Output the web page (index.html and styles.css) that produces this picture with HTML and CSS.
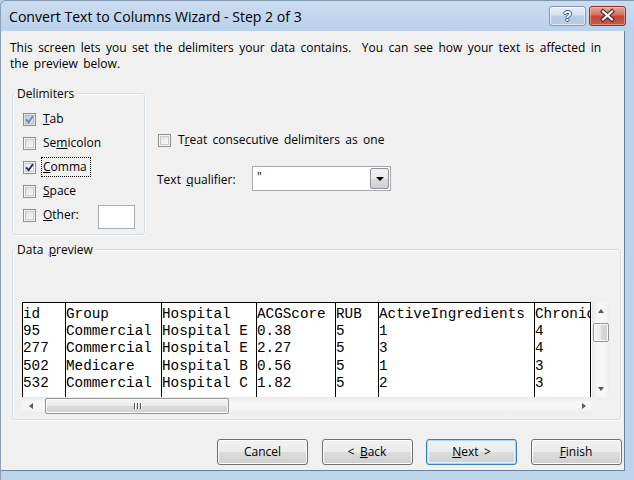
FILE: index.html
```html
<!DOCTYPE html>
<html>
<head>
<meta charset="utf-8">
<title>Convert Text to Columns Wizard - Step 2 of 3</title>
<link rel="stylesheet" href="styles.css">
</head>
<body>
<div class="window">
  <header class="titlebar">
    <span class="title">Convert Text to Columns Wizard - Step 2 of 3</span>
    <div class="caption">
      <span class="cap-btn help">?</span>
      <span class="cap-btn close">
        <svg width="37" height="20" viewBox="0 0 37 20">
          <path d="M14 5.5 L23 13.5 M23 5.5 L14 13.5" stroke="#4a1f1a" stroke-width="4.2" stroke-linecap="square" fill="none"/>
          <path d="M14 5.5 L23 13.5 M23 5.5 L14 13.5" stroke="#ffffff" stroke-width="2.2" stroke-linecap="square" fill="none"/>
        </svg>
      </span>
    </div>
  </header>
  <div class="client">
    <p class="intro">This screen lets you set the delimiters your data contains.&nbsp; You can see how your text is affected in<br>the preview below.</p>

    <div class="options">
      <fieldset class="group delims">
        <legend>Delimiters</legend>
        <div class="group-body">
          <div class="chk-row">
            <span class="box checked dim"><svg width="13" height="13" viewBox="0 0 13 13"><path d="M3.2 6.3 L5.6 9.2 L10 3" stroke="#6f86b5" stroke-width="1.9" fill="none"/></svg></span>
            <span class="lbl"><u>T</u>ab</span>
          </div>
          <div class="chk-row">
            <span class="box"></span>
            <span class="lbl">Se<u>m</u>icolon</span>
          </div>
          <div class="chk-row">
            <span class="box checked"><svg width="13" height="13" viewBox="0 0 13 13"><path d="M3.2 6.3 L5.6 9.2 L10 3" stroke="#1f2d6e" stroke-width="1.9" fill="none"/></svg></span>
            <span class="lbl focus"><u>C</u>omma</span>
          </div>
          <div class="chk-row">
            <span class="box"></span>
            <span class="lbl"><u>S</u>pace</span>
          </div>
          <div class="chk-row">
            <span class="box"></span>
            <span class="lbl"><u>O</u>ther:</span>
            <span class="textbox other-box"></span>
          </div>
        </div>
      </fieldset>

      <div class="right-opts">
        <div class="chk-row treat">
          <span class="box"></span>
          <span class="lbl">T<u>r</u>eat consecutive delimiters as one</span>
        </div>
        <div class="qual-row">
          <span class="qual-lbl">Text <u>q</u>ualifier:</span>
          <div class="combo">
            <span class="combo-val">"</span>
            <span class="combo-drop"><span class="tri-down"></span></span>
          </div>
        </div>
      </div>
    </div>

    <fieldset class="group preview">
      <legend>Data <u>p</u>review</legend>
      <div class="group-body">
        <div class="grid-wrap">
          <div class="grid">
            <div class="col w1"><div>id</div><div>95</div><div>277</div><div>502</div><div>532</div></div>
            <div class="col w2"><div>Group</div><div>Commercial</div><div>Commercial</div><div>Medicare</div><div>Commercial</div></div>
            <div class="col w3"><div>Hospital</div><div>Hospital E</div><div>Hospital E</div><div>Hospital B</div><div>Hospital C</div></div>
            <div class="col w4"><div>ACGScore</div><div>0.38</div><div>2.27</div><div>0.56</div><div>1.82</div></div>
            <div class="col w5"><div>RUB</div><div>5</div><div>5</div><div>5</div><div>5</div></div>
            <div class="col w6"><div>ActiveIngredients</div><div>1</div><div>3</div><div>1</div><div>2</div></div>
            <div class="col w7"><div>Chronic</div><div>4</div><div>4</div><div>3</div><div>3</div></div>
          </div>
          <div class="vscroll">
            <span class="sb-arrow"><span class="tri-up"></span></span>
            <span class="sb-track v"><span class="thumb v"></span></span>
            <span class="sb-arrow"><span class="tri-down small"></span></span>
          </div>
          <div class="hscroll">
            <span class="sb-arrow h"><span class="tri-left"></span></span>
            <span class="sb-track h"><span class="thumb h"><span class="grip"><i></i><i></i><i></i></span></span></span>
            <span class="sb-arrow h"><span class="tri-right"></span></span>
          </div>
          <div class="corner"></div>
        </div>
      </div>
    </fieldset>

    <div class="buttons">
      <span class="btn">Cancel</span>
      <span class="btn">&lt; <u>B</u>ack</span>
      <span class="btn default"><u>N</u>ext &gt;</span>
      <span class="btn"><u>F</u>inish</span>
    </div>
  </div>
</div>
</body>
</html>
```

FILE: styles.css
```css
* { box-sizing: border-box; }

html, body {
  margin: 0;
  padding: 0;
}

body {
  width: 634px;
  height: 480px;
  overflow: hidden;
  font-family: "Open Sans", "Liberation Sans", Arial, sans-serif;
  font-size: 12px;
  word-spacing: 2.3px;
  color: #000;
  background: #bcd3ec;
}

.window {
  width: 634px;
  height: 480px;
  display: flex;
  flex-direction: column;
  background: linear-gradient(to bottom, #cbdcf0 0, #bad1eb 31px, #bdd4ed 100%);
  border-top: 1px solid #7f96b0;
  border-left: 1px solid #8a9fb8;
  border-top-left-radius: 6px;
}

/* ---------- title bar ---------- */
.titlebar {
  height: 30px;
  flex: none;
  display: flex;
  align-items: flex-start;
  justify-content: space-between;
  padding: 5px 8px 0 8px;
}

.title {
  font-size: 14.1px;
  word-spacing: 0;
  line-height: 20px;
  margin-top: 1px;
  color: #000;
}

.caption {
  display: flex;
  gap: 3px;
}

.cap-btn {
  width: 37px;
  height: 20px;
  border-radius: 3px;
  display: flex;
  align-items: center;
  justify-content: center;
}

.help {
  border: 1px solid #8497b0;
  background: linear-gradient(to bottom, #e6eef8 0, #d3e1f1 45%, #bccee6 50%, #b4c9e4 100%);
  box-shadow: inset 0 0 0 1px rgba(255, 255, 255, 0.6);
  font-family: "Liberation Sans", Arial, sans-serif;
  font-weight: bold;
  font-size: 14px;
  color: #fff;
  text-shadow: -1px 0 #3e5877, 1px 0 #3e5877, 0 -1px #3e5877, 0 1px #3e5877;
  line-height: 18px;
}

.close {
  border: 1px solid #84352e;
  background: linear-gradient(to bottom, #e9a99d 0, #d66d5f 45%, #c2453a 50%, #c75a4c 100%);
  box-shadow: inset 0 0 0 1px rgba(255, 220, 210, 0.45);
}

.close svg { display: block; margin: -1px; }

/* ---------- client area ---------- */
.client {
  flex: 1;
  margin: 0 9px 9px 0;
  background: #f0f0f0;
  border-right: 1px solid #6a819c;
  border-bottom: 1px solid #6a819c;
  display: flex;
  flex-direction: column;
}

.intro {
  margin: 9px 0 0 9px;
  line-height: 15.5px;
  white-space: nowrap;
}

.options {
  display: flex;
  align-items: flex-start;
  margin: 15px 0 0 11px;
}

fieldset.group {
  margin: 0;
  padding: 0;
  min-width: 0;
  border: 1px solid #d5dfe5;
  border-radius: 3px;
  box-shadow: inset 1px 1px 0 #fbfbfb, 1px 1px 0 #fbfbfb;
}

fieldset.group legend {
  padding: 0 2px;
  margin-left: 2px;
  line-height: 15px;
}

.delims {
  width: 133px;
}

.delims .group-body {
  padding: 6px 0 7px 10px;
}

.chk-row {
  height: 24px;
  display: flex;
  align-items: center;
}

.box {
  width: 13px;
  height: 13px;
  flex: none;
  border: 1px solid #8e8f8f;
  background: #fff;
  margin-right: 5px;
  position: relative;
  box-shadow: inset 0 0 0 1px #f4f4f4, inset 0 0 0 2px #c6c9ce;
  background-image: linear-gradient(135deg, #dcdee2 0, #f3f3f3 70%, #fafafa 100%);
}

.box svg {
  position: absolute;
  left: -1px;
  top: -1px;
}

.box.checked {
  background-image: linear-gradient(135deg, #e9eaec 0, #fafafa 70%, #ffffff 100%);
}

.box.dim {
  background-image: linear-gradient(135deg, #c7c9cd 0, #dadbdd 70%, #e3e3e3 100%);
  box-shadow: inset 0 0 0 1px #e3e3e3, inset 0 0 0 2px #b9bcc1;
}

.lbl {
  border: 1px dotted transparent;
  padding: 0 3px 0 1px;
  line-height: 18px;
  white-space: nowrap;
}

.lbl.focus {
  border-color: #000;
}

.textbox {
  background: #fff;
  border: 1px solid #abadb3;
}

.other-box {
  width: 37px;
  height: 24px;
  margin-left: auto;
  margin-right: 9px;
  margin-top: 4px;
  border: 1px solid #a9acb2;
}

.right-opts {
  margin-left: 12px;
  display: flex;
  flex-direction: column;
}

.treat {
  margin-top: 42px;
  padding-left: 1px;
}

.qual-row {
  margin-top: 14px;
  height: 25px;
  display: flex;
  align-items: center;
}

.qual-lbl {
  width: 95px;
  padding-top: 2px;
  white-space: nowrap;
}

.combo {
  width: 139px;
  height: 25px;
  background: #fff;
  border: 1px solid #a5a8ae;
  padding: 1px;
  display: flex;
}

.combo-val {
  flex: 1;
  padding-left: 3px;
  line-height: 18px;
}

.combo-drop {
  width: 19px;
  border: 1px solid #8f9296;
  border-radius: 2px;
  background: linear-gradient(to bottom, #f2f2f2 0, #ebebeb 50%, #dddddd 51%, #cfcfcf 100%);
  display: flex;
  align-items: center;
  justify-content: center;
}

.tri-down {
  width: 0;
  height: 0;
  border-left: 4px solid transparent;
  border-right: 4px solid transparent;
  border-top: 4px solid #000;
}

/* ---------- data preview ---------- */
.preview {
  width: 609px;
  margin: 7px 0 0 11px !important;
}

.preview .group-body {
  padding: 0 0 5px 9px;
}

.grid-wrap {
  margin-top: 45px;
  display: grid;
  grid-template-columns: 570px 18px;
  grid-template-rows: 95px 17px;
}

.grid {
  background: #fff;
  display: flex;
  overflow: hidden;
}

.col {
  flex: none;
  border-left: 1px solid #000;
  border-top: 1px solid #000;
  padding-top: 3px;
  font-family: "Liberation Mono", "Courier New", monospace;
  font-size: 14.3px;
  word-spacing: 0;
  line-height: 17.2px;
  white-space: pre;
  overflow: hidden;
  color: #000;
}

.w1 { width: 43px; }
.w2 { width: 96px; }
.w3 { width: 95px; }
.w4 { width: 79px; }
.w5 { width: 43px; }
.w6 { width: 156px; }
.w7 { width: 57px; border-right: 1px solid #000; }

.vscroll {
  display: flex;
  flex-direction: column;
  background: linear-gradient(to right, #e9e9e9 0, #f6f6f6 30%, #f6f6f6 70%, #ececec 100%);
}

.sb-arrow {
  height: 17px;
  flex: none;
  display: flex;
  align-items: center;
  justify-content: center;
}

.sb-arrow.h {
  width: 17px;
  height: auto;
}

.sb-track {
  flex: 1;
  display: flex;
}

.sb-track.v {
  flex-direction: column;
  padding: 4px 1px 0 1px;
}

.sb-track.h {
  padding: 0 0 0 6px;
  align-items: stretch;
}

.thumb {
  border: 1px solid #959595;
  border-radius: 2px;
}

.thumb.v {
  height: 19px;
  background: linear-gradient(to right, #f4f4f4 0, #eaeaea 50%, #dadada 51%, #d0d0d0 100%);
  box-shadow: inset 0 0 0 1px #fbfbfb;
}

.thumb.h {
  width: 184px;
  margin: 1px 0 0 0;
  background: linear-gradient(to bottom, #f4f4f4 0, #eaeaea 50%, #dadada 51%, #d2d2d2 100%);
  box-shadow: inset 0 0 0 1px #fbfbfb;
  display: flex;
  align-items: center;
  justify-content: center;
}

.grip {
  display: flex;
  gap: 2px;
}

.grip i {
  display: block;
  width: 1px;
  height: 6px;
  background: #545454;
  box-shadow: 1px 0 0 #fdfdfd;
}

.tri-down.small {
  border-left-width: 3.5px;
  border-right-width: 3.5px;
  border-top: 4px solid #5a5a5a;
}

.tri-up {
  width: 0;
  height: 0;
  border-left: 3.5px solid transparent;
  border-right: 3.5px solid transparent;
  border-bottom: 4px solid #5a5a5a;
}

.tri-left {
  width: 0;
  height: 0;
  border-top: 3.5px solid transparent;
  border-bottom: 3.5px solid transparent;
  border-right: 4px solid #5a5a5a;
}

.tri-right {
  width: 0;
  height: 0;
  border-top: 3.5px solid transparent;
  border-bottom: 3.5px solid transparent;
  border-left: 4px solid #5a5a5a;
}

.hscroll {
  display: flex;
  background: linear-gradient(to bottom, #e9e9e9 0, #f6f6f6 30%, #f6f6f6 70%, #ececec 100%);
}

.corner {
  background: #f0f0f0;
}

/* ---------- buttons ---------- */
.buttons {
  margin-top: 19px;
  display: flex;
  justify-content: flex-end;
  gap: 13.5px;
  padding-right: 2.5px;
}

.btn {
  width: 91px;
  height: 26px;
  border: 1px solid #707070;
  border-radius: 3px;
  background: linear-gradient(to bottom, #f2f2f2 0, #ebebeb 50%, #dddddd 51%, #cfcfcf 100%);
  box-shadow: inset 0 0 0 1px #fcfcfc;
  display: flex;
  align-items: center;
  justify-content: center;
  line-height: 16px;
  white-space: pre;
}

.btn.default {
  border-color: #3c7fb1;
  box-shadow: inset 0 0 0 1px #a6dcf5, inset 0 0 0 2px #e0f2fb;
}
```
